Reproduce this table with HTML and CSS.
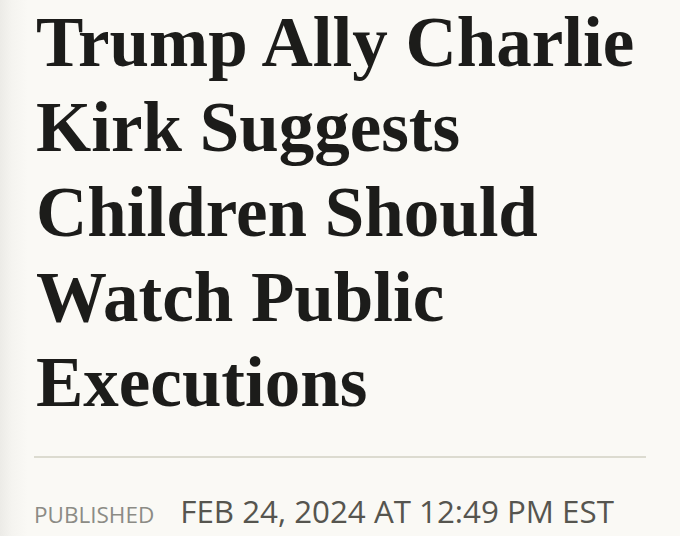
FILE: index.html
```html
<!DOCTYPE html>
<html lang="en">
<head>
<meta charset="utf-8">
<title>Trump Ally Charlie Kirk Suggests Children Should Watch Public Executions</title>
<link rel="stylesheet" href="styles.css">
</head>
<body>
<main class="article">
  <h1 class="headline">Trump Ally Charlie Kirk Suggests Children Should Watch Public Executions</h1>
  <hr class="rule">
  <p class="meta"><span class="meta-label">PUBLISHED</span><span class="meta-date">FEB 24, 2024 AT 12:49 PM EST</span></p>
</main>
</body>
</html>
```

FILE: styles.css
```css
html, body {
  margin: 0;
  padding: 0;
}
body {
  width: 680px;
  height: 536px;
  overflow: hidden;
  background: linear-gradient(to right, #ecebe7 0px, #f5f4f0 12px, #faf9f5 28px, #faf9f5 100%);
}
.article {
  padding: 0 34px 0 34px;
}
.headline {
  margin: 0 0 0 2px;
  font-family: "Liberation Serif", "Times New Roman", serif;
  font-weight: 700;
  font-size: 71px;
  line-height: 85px;
  letter-spacing: 0;
  color: #1c1c1a;
}
.rule {
  margin: 31px 0 0 0;
  border: 0;
  height: 1.5px;
  background: #dcdbd0;
}
.meta {
  margin: 32px 0 0 0;
  display: flex;
  align-items: baseline;
  gap: 26px;
  font-family: "Open Sans", "Liberation Sans", sans-serif;
  white-space: nowrap;
}
.meta-label {
  font-size: 22.5px;
  color: #8c8b85;
}
.meta-date {
  font-size: 31.3px;
  color: #56554f;
}
```
